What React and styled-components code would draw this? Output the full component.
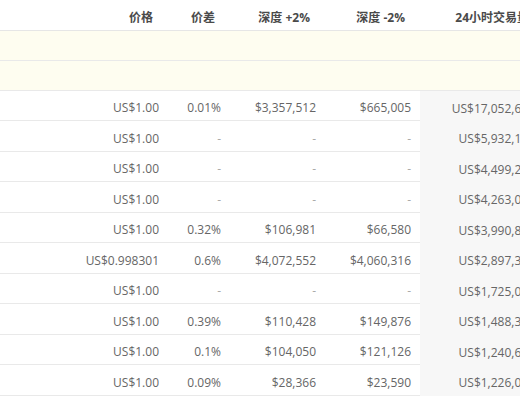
import React from 'react'
import styled, { createGlobalStyle } from 'styled-components'

const Global = createGlobalStyle`
  html, body { margin:0; padding:0; background:#fff; }
  body { overflow:hidden; }
`
const Wrap = styled.div`
  width:520px;
  height:400px;
  overflow:hidden;
  font-family:'Open Sans','Noto Sans CJK SC',sans-serif;
`
const Table = styled.div`
  width:600px;
`
const cols = '165px 62px 95px 95px 124px'
const HeadRow = styled.div`
  display:grid;
  grid-template-columns:${cols};
  height:31px;
  border-bottom:1px solid #e6e6e6;
  box-sizing:border-box;
`
const Th = styled.div`
  display:flex;
  align-items:center;
  justify-content:flex-end;
  padding:3px 12px 0 0;
  font-size:12px;
  font-weight:700;
  color:#4a4a4a;
  white-space:nowrap;
`
const Row = styled.div`
  display:grid;
  grid-template-columns:${cols};
  height:${p => p.$h}px;
  border-bottom:1px solid #e9e9e9;
  box-sizing:border-box;
  background:${p => p.$ad ? '#fefdf0' : '#fff'};
`
const Td = styled.div`
  display:flex;
  align-items:center;
  justify-content:flex-end;
  padding:4px 6px 0 0;
  font-size:12px;
  color:${p => p.$dim ? '#aaa' : '#666'};
  white-space:nowrap;
`
const Vol = styled(Td)`
  background:#f7f7f7;
  margin:0 0 -1px 3px;
`

const rows = [
  ['US$1.00', '0.01%', '$3,357,512', '$665,005', 'US$17,052,663'],
  ['US$1.00', '-', '-', '-', 'US$5,932,158'],
  ['US$1.00', '-', '-', '-', 'US$4,499,243'],
  ['US$1.00', '-', '-', '-', 'US$4,263,071'],
  ['US$1.00', '0.32%', '$106,981', '$66,580', 'US$3,990,842'],
  ['US$0.998301', '0.6%', '$4,072,552', '$4,060,316', 'US$2,897,315'],
  ['US$1.00', '-', '-', '-', 'US$1,725,028'],
  ['US$1.00', '0.39%', '$110,428', '$149,876', 'US$1,488,337'],
  ['US$1.00', '0.1%', '$104,050', '$121,126', 'US$1,240,619'],
  ['US$1.00', '0.09%', '$28,366', '$23,590', 'US$1,226,054'],
]

const App = () => {
  return (
    <Wrap>
      <Global/>
      <Table>
        <HeadRow>
          <Th>价格</Th>
          <Th>价差</Th>
          <Th>深度 +2%</Th>
          <Th>深度 -2%</Th>
          <Th>24小时交易量</Th>
        </HeadRow>
        <Row $ad $h={30}><div/><div/><div/><div/><div/></Row>
        <Row $ad $h={30}><div/><div/><div/><div/><div/></Row>
        {rows.map((r, i) => (
          <Row key={i} $h={i % 2 ? 31 : 30}>
            <Td>{r[0]}</Td>
            <Td $dim={r[1] === '-'}>{r[1]}</Td>
            <Td $dim={r[2] === '-'}>{r[2]}</Td>
            <Td $dim={r[3] === '-'}>{r[3]}</Td>
            <Vol>{r[4]}</Vol>
          </Row>
        ))}
      </Table>
    </Wrap>
  )
}

export default App
